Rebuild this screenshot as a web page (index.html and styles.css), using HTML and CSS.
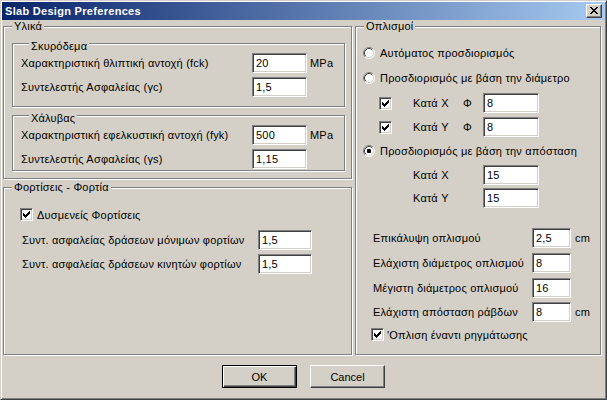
FILE: index.html
```html
<!DOCTYPE html>
<html>
<head>
<meta charset="utf-8">
<title>Slab Design Preferences</title>
<link rel="stylesheet" href="styles.css">
</head>
<body>
<div class="window">
  <div class="titlebar">
    <span class="title">Slab Design Preferences</span>
    <span class="close"><svg width="8" height="7" viewBox="0 0 8 7" shape-rendering="crispEdges"><path fill="#000" d="M0 0h2v1h-2z M6 0h2v1h-2z M1 1h2v1h-2z M5 1h2v1h-2z M2 2h4v1h-4z M3 3h2v1h-2z M2 4h4v1h-4z M1 5h2v1h-2z M5 5h2v1h-2z M0 6h2v1h-2z M6 6h2v1h-2z"/></svg></span>
  </div>
  <div class="client">
    <div class="panels">
      <div class="col-left">
        <div class="group g-materials">
          <div class="gtitle">Υλικά</div>
          <div class="group g-sub g-concrete">
            <div class="gtitle">Σκυρόδεμα</div>
            <div class="row"><span class="lbl w-sub">Χαρακτηριστική θλιπτική αντοχή (fck)</span><span class="edit w-sub-e">20</span><span class="unit">MPa</span></div>
            <div class="row gap4"><span class="lbl w-sub">Συντελεστής Ασφαλείας (γc)</span><span class="edit w-sub-e">1,5</span></div>
          </div>
          <div class="group g-sub g-steel">
            <div class="gtitle">Χάλυβας</div>
            <div class="row"><span class="lbl w-sub">Χαρακτηριστική εφελκυστική αντοχή (fyk)</span><span class="edit w-sub-e">500</span><span class="unit">MPa</span></div>
            <div class="row gap4"><span class="lbl w-sub">Συντελεστής Ασφαλείας (γs)</span><span class="edit w-sub-e">1,15</span></div>
          </div>
        </div>
        <div class="group g-loads">
          <div class="gtitle">Φορτίσεις - Φορτία</div>
          <div class="check-row loads-check">
            <span class="checkbox checked"><svg width="7" height="7" viewBox="0 0 7 7" shape-rendering="crispEdges"><path fill="#000" d="M0 2h1v3h-1z M1 3h1v3h-1z M2 4h1v3h-1z M3 3h1v3h-1z M4 2h1v3h-1z M5 1h1v3h-1z M6 0h1v3h-1z"/></svg></span>
            <span class="check-text">Δυσμενείς Φορτίσεις</span>
          </div>
          <div class="row loads-row first"><span class="lbl w-load">Συντ. ασφαλείας δράσεων μόνιμων φορτίων</span><span class="edit w-load-e">1,5</span></div>
          <div class="row loads-row gap4"><span class="lbl w-load">Συντ. ασφαλείας δράσεων κινητών φορτίων</span><span class="edit w-load-e">1,5</span></div>
        </div>
      </div>
      <div class="group g-rebar">
        <div class="gtitle">Οπλισμοί</div>
        <div class="radio-row r1">
          <svg class="radio" width="12" height="12" viewBox="0 0 12 12"><circle cx="6" cy="6" r="5" fill="#fff"/><path d="M2.11 9.89 A5.5 5.5 0 0 1 9.89 2.11" fill="none" stroke="#808080"/><path d="M9.89 2.11 A5.5 5.5 0 0 1 2.11 9.89" fill="none" stroke="#fff"/><path d="M2.82 9.18 A4.5 4.5 0 0 1 9.18 2.82" fill="none" stroke="#404040"/><path d="M9.18 2.82 A4.5 4.5 0 0 1 2.82 9.18" fill="none" stroke="#D4D0C8"/></svg>
          <span class="radio-text">Αυτόματος προσδιορισμός</span>
        </div>
        <div class="radio-row r2">
          <svg class="radio" width="12" height="12" viewBox="0 0 12 12"><circle cx="6" cy="6" r="5" fill="#fff"/><path d="M2.11 9.89 A5.5 5.5 0 0 1 9.89 2.11" fill="none" stroke="#808080"/><path d="M9.89 2.11 A5.5 5.5 0 0 1 2.11 9.89" fill="none" stroke="#fff"/><path d="M2.82 9.18 A4.5 4.5 0 0 1 9.18 2.82" fill="none" stroke="#404040"/><path d="M9.18 2.82 A4.5 4.5 0 0 1 2.82 9.18" fill="none" stroke="#D4D0C8"/></svg>
          <span class="radio-text">Προσδιορισμός με βάση την διάμετρο</span>
        </div>
        <div class="row dia-row first">
          <span class="cbcell"><span class="checkbox checked"><svg width="7" height="7" viewBox="0 0 7 7" shape-rendering="crispEdges"><path fill="#000" d="M0 2h1v3h-1z M1 3h1v3h-1z M2 4h1v3h-1z M3 3h1v3h-1z M4 2h1v3h-1z M5 1h1v3h-1z M6 0h1v3h-1z"/></svg></span></span>
          <span class="lbl w-kata">Κατά X</span><span class="lbl w-phi">Φ</span><span class="edit w-dia-e">8</span>
        </div>
        <div class="row dia-row gap4">
          <span class="cbcell"><span class="checkbox checked"><svg width="7" height="7" viewBox="0 0 7 7" shape-rendering="crispEdges"><path fill="#000" d="M0 2h1v3h-1z M1 3h1v3h-1z M2 4h1v3h-1z M3 3h1v3h-1z M4 2h1v3h-1z M5 1h1v3h-1z M6 0h1v3h-1z"/></svg></span></span>
          <span class="lbl w-kata">Κατά Y</span><span class="lbl w-phi">Φ</span><span class="edit w-dia-e">8</span>
        </div>
        <div class="radio-row r3">
          <svg class="radio" width="12" height="12" viewBox="0 0 12 12"><circle cx="6" cy="6" r="5" fill="#fff"/><path d="M2.11 9.89 A5.5 5.5 0 0 1 9.89 2.11" fill="none" stroke="#808080"/><path d="M9.89 2.11 A5.5 5.5 0 0 1 2.11 9.89" fill="none" stroke="#fff"/><path d="M2.82 9.18 A4.5 4.5 0 0 1 9.18 2.82" fill="none" stroke="#404040"/><path d="M9.18 2.82 A4.5 4.5 0 0 1 2.82 9.18" fill="none" stroke="#D4D0C8"/><rect x="4" y="4" width="4" height="4" fill="#000" rx="1"/></svg>
          <span class="radio-text">Προσδιορισμός με βάση την απόσταση</span>
        </div>
        <div class="row dist-row first"><span class="lbl w-dist">Κατά X</span><span class="edit w-dia-e">15</span></div>
        <div class="row dist-row second"><span class="lbl w-dist">Κατά Y</span><span class="edit w-dia-e">15</span></div>
        <div class="row misc-row first"><span class="lbl w-misc">Επικάλυψη οπλισμού</span><span class="edit w-misc-e">2,5</span><span class="unit">cm</span></div>
        <div class="row misc-row gap5"><span class="lbl w-misc">Ελάχιστη διάμετρος οπλισμού</span><span class="edit w-misc-e">8</span></div>
        <div class="row misc-row gap5"><span class="lbl w-misc">Μέγιστη διάμετρος οπλισμού</span><span class="edit w-misc-e">16</span></div>
        <div class="row misc-row gap4"><span class="lbl w-misc">Ελάχιστη απόσταση ράβδων</span><span class="edit w-misc-e">8</span><span class="unit">cm</span></div>
        <div class="check-row crack-check">
          <span class="checkbox checked"><svg width="7" height="7" viewBox="0 0 7 7" shape-rendering="crispEdges"><path fill="#000" d="M0 2h1v3h-1z M1 3h1v3h-1z M2 4h1v3h-1z M3 3h1v3h-1z M4 2h1v3h-1z M5 1h1v3h-1z M6 0h1v3h-1z"/></svg></span>
          <span class="check-text crack-text">'Οπλιση έναντι ρηγμάτωσης</span>
        </div>
      </div>
    </div>
    <div class="buttons">
      <button class="btn default">OK</button>
      <button class="btn">Cancel</button>
    </div>
  </div>
</div>
</body>
</html>
```
FILE: styles.css
```css
* { box-sizing: border-box; }
html, body { margin: 0; padding: 0; background: #D4D0C8; }
body { font-family: "Liberation Sans", Arial, sans-serif; font-size: 11px; color: #000; letter-spacing: 0.2px; }

.window {
  width: 607px; height: 400px;
  border: 1px solid; border-color: #D4D0C8 #404040 #404040 #D4D0C8;
  box-shadow: inset 1px 1px #fff, inset -1px -1px #808080;
  padding: 1px;
  display: flex; flex-direction: column;
  background: #D4D0C8;
}
.titlebar {
  height: 18px; flex: none;
  background: linear-gradient(to right, #0A246A, #A6CAF0);
  display: flex; align-items: center; justify-content: space-between;
  padding: 0 3px 0 3px;
}
.title { color: #fff; font-weight: bold; font-size: 11px; letter-spacing: 0.3px; }
.close {
  width: 16px; height: 14px;
  background: #D4D0C8;
  border: 1px solid; border-color: #fff #404040 #404040 #fff;
  box-shadow: inset -1px -1px #808080;
  display: flex; align-items: center; justify-content: center;
  padding: 0 0 1px 0;
}
.close svg { display: block; }

.client { flex: 1; display: flex; flex-direction: column; }
.panels { display: flex; padding: 6px 0 0 1px; }
.col-left { width: 349px; display: flex; flex-direction: column; }

.group {
  border: 1px solid #808080;
  box-shadow: inset 1px 1px #fff, 1px 1px #fff;
}
.gtitle {
  width: max-content;
  margin: -7px 0 0 8px;
  padding: 0 2px;
  height: 13px; line-height: 13px;
  background: #D4D0C8;
}

.g-materials { padding-bottom: 7px; }
.g-sub { width: 333px; margin: 0 0 0 8px; padding: 3px 0 0 8px; }
.g-concrete { margin-top: 10px; padding-bottom: 9px; }
.g-steel { margin-top: 8px; padding-bottom: 1px; }
.g-loads { margin-top: 8px; flex: 1; }
.g-rebar { width: 246px; height: 329px; margin-left: 3px; }

.row { display: flex; align-items: center; height: 20px; }
.gap4 { margin-top: 4px; }
.gap5 { margin-top: 5px; }
.lbl { flex: none; white-space: nowrap; }
.unit { margin-left: 3px; }

.edit {
  flex: none;
  display: flex; align-items: center;
  height: 20px;
  background: #fff;
  border: 1px solid; border-color: #808080 #fff #fff #808080;
  box-shadow: inset 1px 1px #404040, inset -1px -1px #D4D0C8;
  padding: 0 3px;
}

.w-sub { width: 231px; }
.w-sub-e { width: 55px; }

.check-row { display: flex; align-items: center; height: 13px; }
.checkbox {
  flex: none;
  width: 13px; height: 13px;
  background: #fff;
  border: 1px solid; border-color: #808080 #fff #fff #808080;
  box-shadow: inset 1px 1px #404040, inset -1px -1px #D4D0C8;
  display: flex; align-items: center; justify-content: center;
}
.checkbox svg { display: block; }
.check-text { margin-left: 4px; white-space: nowrap; }

.loads-check { margin: 14px 0 0 16px; }
.loads-row { margin-left: 18px; }
.loads-row.first { margin-top: 9px; }
.w-load { width: 236px; }
.w-load-e { width: 54px; }

.radio-row { display: flex; align-items: center; height: 12px; margin-left: 7px; }
.radio { display: block; flex: none; }
.radio-text { margin-left: 5px; white-space: nowrap; }
.r1 { margin-top: 14px; }
.r2 { margin-top: 13px; }
.r3 { margin-top: 8px; }

.dia-row { margin-left: 23px; }
.dia-row.first { margin-top: 9px; }
.cbcell { width: 34px; flex: none; display: flex; }
.w-kata { width: 50px; }
.w-phi { width: 20px; }
.w-dia-e { width: 56px; }

.dist-row { margin-left: 57px; }
.dist-row.first { margin-top: 8px; }
.dist-row.second { margin-top: 3px; }
.w-dist { width: 70px; }

.misc-row { margin-left: 17px; }
.misc-row.first { margin-top: 20px; }
.w-misc { width: 159px; }
.w-misc-e { width: 39px; }
.misc-row .unit { margin-left: 4px; }

.crack-check { margin: 6px 0 0 15px; }
.crack-text { margin-left: 3px; }

.buttons { display: flex; justify-content: center; gap: 13px; margin-top: 10px; }
.btn {
  width: 75px; height: 23px;
  font: inherit; color: #000;
  background: #D4D0C8;
  border: 1px solid; border-color: #fff #404040 #404040 #fff;
  box-shadow: inset -1px -1px #808080;
  padding: 0;
}
.btn.default {
  border: 1px solid #000;
  box-shadow: inset 1px 1px #fff, inset -1px -1px #404040, inset -2px -2px #808080;
}
```
